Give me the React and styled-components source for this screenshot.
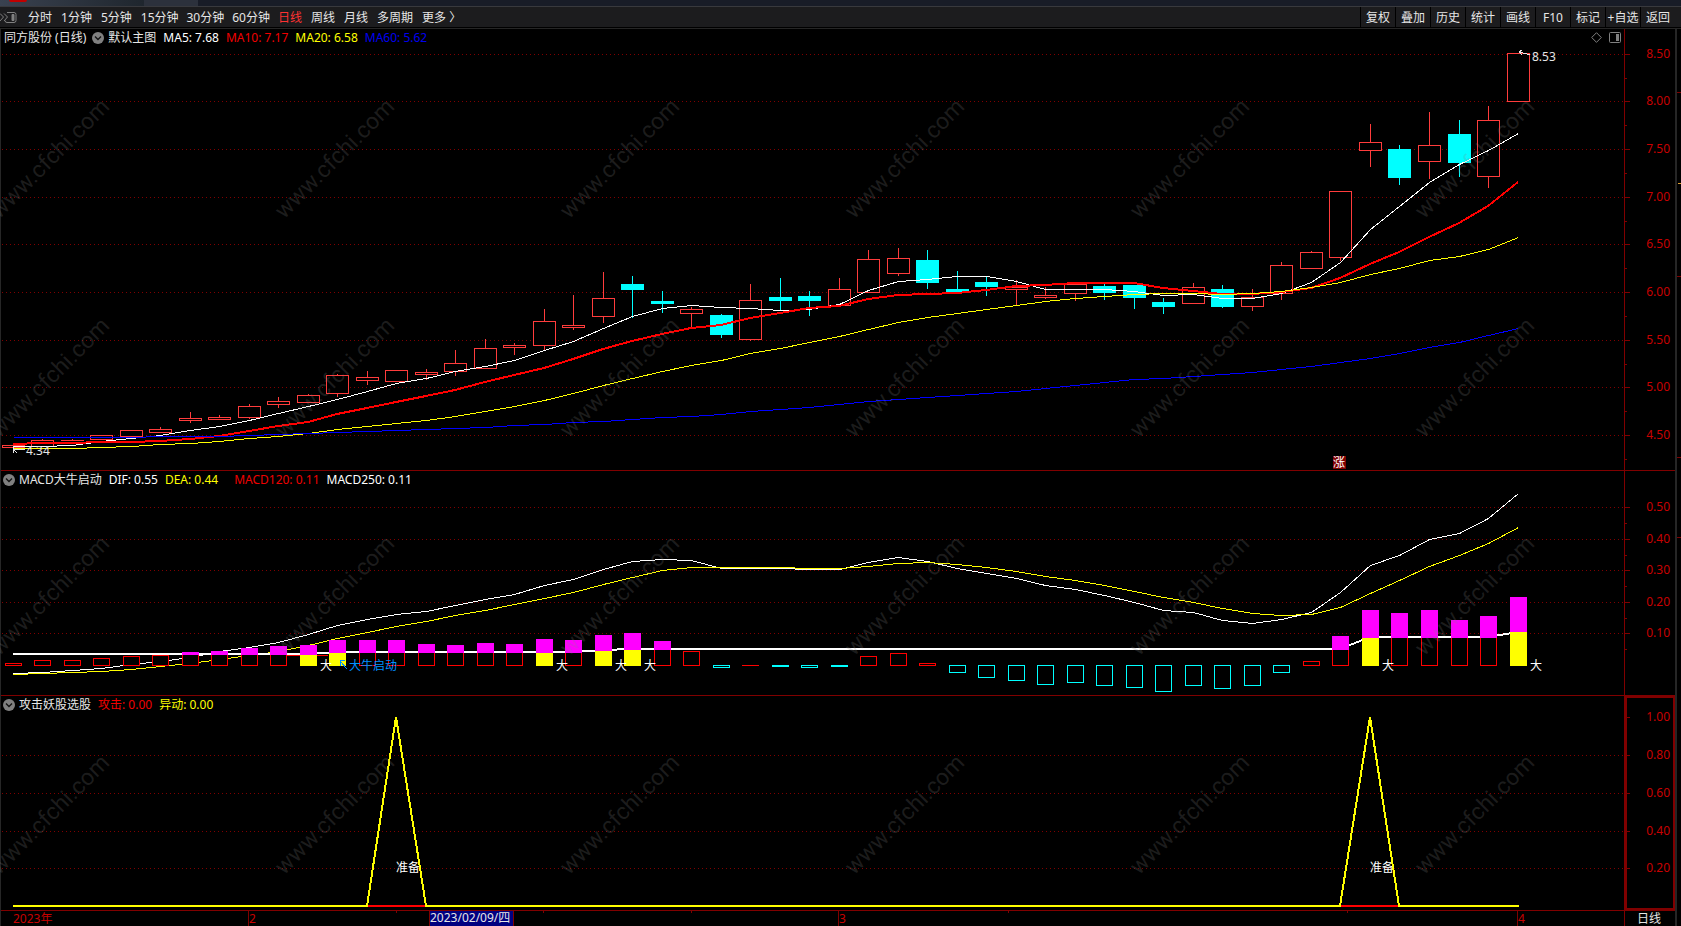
import React from 'react';
import styled, { createGlobalStyle } from 'styled-components';

const GlobalStyle = createGlobalStyle`
    * { box-sizing: border-box; }

    body {
        margin: 0;
        background: #000;
        color: #e6e6e6;
        font: 12px/16px 'Noto Sans', 'Noto Sans CJK SC', sans-serif;
        overflow-x: hidden;
    }

    button {
        font: inherit;
        color: inherit;
        background: none;
        border: 0;
        padding: 0;
        cursor: pointer;
        white-space: nowrap;
    }

    svg { display: block; }
`;

const Page = styled.div`
    display: flex;
    flex-direction: column;
    position: relative;
    overflow: hidden;
`;

const TitleStrip = styled.div`
    height: 7px;
    display: flex;
    background: #181c27;
    border-bottom: 1px solid #38393d;
`;

const StripTab = styled.div`
    width: ${({ $wide }) => ($wide ? '144px' : '54px')};
    padding-left: 9px;
    background: ${({ $wide }) => ($wide ? 'linear-gradient(90deg, #3a4250, #1f262e)' : '#2c313c')};
`;

const RedMark = styled.div`
    width: 18px;
    height: 2px;
    background: #c00000;
    border-radius: 0 0 2px 2px;
`;

const Toolbar = styled.nav`
    height: 21px;
    display: flex;
    align-items: center;
    justify-content: space-between;
    padding-right: 6px;
    background: #1c1c1e;
    border-bottom: 1px solid #000;
`;

const Periods = styled.div`
    display: flex;
    align-items: center;
    gap: 9px;
    padding-top: 2px;
`;

const PeriodButton = styled.button`
    color: ${({ $active }) => ($active ? '#ff3232' : '#e6e6e6')};
    margin-right: ${({ $long }) => ($long ? '-1px' : '0')};
`;

const Tools = styled.div`
    display: flex;
    height: 100%;
`;

const ToolButton = styled.button`
    width: 35px;
    display: flex;
    align-items: center;
    justify-content: center;
    padding-top: 2px;
    border-left: 1px solid #000;
`;

const Body = styled.div`
    display: flex;
    border-top: 1px solid #262626;
`;

const Charts = styled.main`
    flex: 1;
    min-width: 0;
    border-left: 1px solid #262626;
`;

const Panel = styled.section`
    display: flex;
    border-top: ${({ $first }) => ($first ? '0' : '1px solid #800000')};
`;

const Plot = styled.div`
    flex: 1;
    min-width: 0;
    display: flex;
    flex-direction: column;
`;

const Legend = styled.header`
    height: ${({ $tall }) => ($tall ? '19px' : '17px')};
    display: flex;
    align-items: center;
    gap: 6px;
    padding: ${({ $tall }) => ($tall ? '0 3px 2px' : '0 3px 0 2px')};
    white-space: nowrap;
`;

const LegendValue = styled.span`
    color: ${({ $color }) => $color || '#e6e6e6'};
    margin-left: ${({ $spaced }) => ($spaced ? '10px' : '1px')};
`;

const Title = styled.span`
    margin-left: ${({ $tight }) => ($tight ? '-2px' : '0')};
`;

const Corner = styled.div`
    display: flex;
    align-items: center;
    gap: 7px;
    margin-left: auto;
`;

const Drawing = styled.svg`
    width: 100%;
    height: ${({ $height }) => $height}px;
    overflow: hidden;
    shape-rendering: crispEdges;
`;

const Scale = styled.svg`
    flex: none;
    width: 51px;
    height: ${({ $height }) => $height}px;
    fill: #c80000;
    shape-rendering: crispEdges;
`;

const TimeRow = styled.footer`
    display: flex;
    height: 16px;
    border-top: 1px solid #800000;
`;

const PeriodName = styled.div`
    flex: none;
    width: 51px;
    padding-left: 12px;
    line-height: 15px;
    border-left: 1px solid #800000;
`;

const SideRail = styled.aside`
    flex: none;
    width: 6px;
    border-left: 2px solid #262626;
`;

const Watermarks = styled.svg`
    position: absolute;
    left: 0;
    top: 0;
    width: 100%;
    height: 100%;
    pointer-events: none;
    fill: rgba(128, 128, 128, 0.22);
    font: 23px Roboto, sans-serif;
`;

const periods = ['分时', '1分钟', '5分钟', '15分钟', '30分钟', '60分钟', '日线', '周线', '月线', '多周期', '更多 〉'];
const tools = ['复权', '叠加', '历史', '统计', '画线', 'F10', '标记', '+自选', '返回'];

const RED = '#ff3c3c';
const CYAN = '#00ffff';

// [direction, high, top, bottom, low]
const candles = [
    ['u', 445, 445, 447, 447], ['u', 439, 440, 446, 446], ['u', 439, 440, 440, 440], ['u', 435, 435, 439, 439],
    ['u', 430, 430, 436, 436], ['u', 427, 429, 432, 432], ['u', 412, 418, 420, 422], ['u', 415, 417, 419, 419],
    ['u', 404, 406, 417, 418], ['u', 397, 401, 404, 407], ['u', 394, 395, 402, 402], ['u', 374, 375, 393, 396],
    ['u', 371, 377, 380, 384], ['u', 370, 370, 381, 381], ['u', 369, 372, 374, 379], ['u', 350, 363, 371, 375],
    ['u', 339, 348, 368, 368], ['u', 343, 345, 347, 354], ['u', 309, 321, 345, 349], ['u', 295, 325, 327, 329],
    ['u', 272, 298, 316, 322], ['d', 276, 284, 289, 317], ['d', 291, 301, 303, 312], ['u', 307, 309, 313, 327],
    ['d', 314, 315, 334, 337], ['u', 284, 300, 339, 340], ['d', 278, 297, 300, 310], ['d', 291, 296, 300, 315],
    ['u', 278, 289, 305, 305], ['u', 250, 259, 292, 292], ['u', 248, 258, 273, 275], ['d', 250, 260, 282, 288],
    ['d', 271, 289, 291, 292], ['d', 277, 282, 286, 295], ['u', 280, 287, 289, 305], ['u', 287, 295, 297, 298],
    ['u', 284, 284, 293, 300], ['d', 283, 286, 292, 299], ['d', 285, 285, 297, 308], ['d', 298, 302, 306, 313],
    ['u', 283, 287, 303, 303], ['d', 285, 289, 306, 307], ['u', 289, 297, 306, 310], ['u', 262, 265, 293, 299],
    ['u', 251, 252, 268, 268], ['u', 191, 191, 257, 260], ['u', 124, 142, 150, 166], ['d', 145, 149, 177, 184],
    ['u', 112, 145, 161, 178], ['d', 120, 134, 162, 176], ['u', 106, 120, 176, 187], ['u', 53, 53, 101, 101],
];

const ma5 = [446, 446, 445, 441, 438, 435, 430, 426, 420, 413, 406, 399, 391, 383, 378, 371, 366, 360, 350, 341, 328, 316, 308, 305, 307, 308, 310, 309, 304, 290, 281, 279, 276, 276, 281, 289, 289, 289, 291, 295, 294, 298, 298, 293, 282, 262, 229, 206, 182, 164, 150, 133];
const ma10 = [444, 443, 443, 442, 442, 441, 439, 436, 431, 426, 422, 414, 408, 402, 396, 390, 382, 375, 368, 359, 349, 341, 334, 328, 325, 318, 313, 308, 306, 299, 295, 294, 293, 290, 286, 285, 283, 283, 283, 288, 291, 294, 294, 292, 288, 278, 264, 252, 237, 223, 206, 182];
const ma20 = [448, 448, 448, 447, 446, 444, 443, 441, 438, 436, 433, 429, 426, 423, 420, 416, 411, 406, 400, 393, 385, 378, 371, 365, 360, 353, 348, 342, 336, 329, 322, 317, 313, 309, 305, 301, 298, 296, 294, 293, 293, 294, 293, 291, 287, 282, 274, 268, 260, 256, 249, 237];
const ma60 = [437, 437, 437, 437, 437, 436, 436, 436, 435, 434, 433, 432, 431, 430, 429, 428, 427, 425, 424, 422, 421, 419, 417, 416, 414, 411, 409, 407, 404, 401, 399, 397, 395, 393, 391, 388, 385, 382, 379, 378, 376, 374, 372, 369, 366, 362, 358, 353, 347, 342, 335, 328];

const dif = [673, 672, 670, 668, 664, 661, 657, 651, 647, 642, 634, 625, 619, 614, 611, 605, 599, 594, 585, 579, 569, 561, 559, 560, 568, 568, 568, 569, 569, 562, 557, 561, 568, 573, 578, 585, 589, 595, 602, 610, 612, 620, 623, 619, 612, 592, 565, 555, 539, 533, 518, 493];
const dea = [674, 673, 672, 671, 669, 666, 663, 659, 655, 651, 645, 638, 632, 626, 621, 615, 610, 604, 598, 592, 584, 577, 570, 567, 567, 567, 567, 568, 568, 566, 563, 562, 564, 567, 571, 576, 580, 585, 591, 597, 602, 608, 613, 615, 614, 607, 593, 580, 566, 555, 543, 527];

// [kind, edge, split]: r hollow red, c cyan below zero, m magenta over hollow red, y magenta over yellow
const bars = [
    ['r', 663], ['r', 660], ['r', 660], ['r', 658], ['r', 656], ['r', 655], ['m', 652, 655], ['m', 651, 655],
    ['m', 648, 655], ['m', 646, 655], ['y', 645, 655], ['y', 640, 653], ['m', 640, 653], ['m', 640, 653],
    ['m', 644, 653], ['m', 645, 653], ['m', 643, 653], ['m', 644, 653], ['y', 639, 653], ['m', 640, 653],
    ['y', 635, 651], ['y', 633, 650], ['m', 641, 650], ['r', 651], ['c', 667], ['r', 665], ['c', 666], ['c', 667],
    ['c', 666], ['r', 656], ['r', 653], ['r', 663], ['c', 672], ['c', 677], ['c', 680], ['c', 684], ['c', 682],
    ['c', 685], ['c', 687], ['c', 691], ['c', 685], ['c', 688], ['c', 685], ['c', 672], ['r', 661], ['m', 636, 650],
    ['y', 610, 638], ['m', 613, 638], ['m', 610, 638], ['m', 620, 638], ['m', 616, 638], ['y', 597, 632],
];

const priceScale = [['8.50', 54], ['8.00', 101], ['7.50', 149], ['7.00', 197], ['6.50', 244], ['6.00', 292], ['5.50', 340], ['5.00', 387], ['4.50', 435]];
const macdScale = [['0.50', 507], ['0.40', 539], ['0.30', 570], ['0.20', 602], ['0.10', 633]];
const signalScale = [['1.00', 717], ['0.80', 755], ['0.60', 793], ['0.40', 831], ['0.20', 868]];

const ZERO = 665;

const xAt = (i) => Math.floor(13 + 29.5104 * i);

const Line = ({ data, color, width = 1 }) => {
    const shift = width === 1 ? 0.5 : 0;
    const points = data.map((y, i) => `${xAt(i) + shift},${y + shift}`).join(' ');
    return <polyline points={points} fill="none" stroke={color} strokeWidth={width} />;
};

const Grid = ({ scale }) => (
    <g stroke="#800000" strokeDasharray="1 3">
        {scale.map(([label, y]) => (
            <line key={label} x1="2" x2="100%" y1={y + 0.5} y2={y + 0.5} />
        ))}
    </g>
);

const Candle = ({ i, data }) => {
    const [dir, high, top, bottom, low] = data;
    const x = xAt(i);
    const color = dir === 'u' ? RED : CYAN;
    return (
        <g stroke={color}>
            {high < top && <line x1={x + 0.5} x2={x + 0.5} y1={high} y2={top} />}
            {low > bottom && <line x1={x + 0.5} x2={x + 0.5} y1={bottom + 1} y2={low + 1} />}
            {top === bottom
                ? <line x1={x - 11} x2={x + 12} y1={top + 0.5} y2={top + 0.5} />
                : <rect x={x - 10.5} y={top + 0.5} width="22" height={bottom - top} fill={dir === 'u' ? '#000' : color} />}
        </g>
    );
};

const Bar = ({ i, data }) => {
    const [kind, edge, split] = data;
    const x = xAt(i);
    if (kind === 'c') {
        return <rect x={x - 7.5} y={ZERO + 0.5} width="16" height={edge - ZERO} fill="#000" stroke={CYAN} />;
    }
    if (kind === 'r') {
        return edge === ZERO
            ? <line x1={x - 8} x2={x + 9} y1={ZERO + 0.5} y2={ZERO + 0.5} stroke="#f00" />
            : <rect x={x - 7.5} y={edge + 0.5} width="16" height={ZERO - edge} fill="#000" stroke="#f00" />;
    }
    return (
        <g>
            {kind === 'm' && <rect x={x - 7.5} y={split - 0.5} width="16" height={ZERO - split + 1} fill="#000" stroke="#f00" />}
            {kind === 'y' && <rect x={x - 8} y={split} width="17" height={ZERO - split + 1} fill="#ff0" />}
            <rect x={x - 8} y={edge} width="17" height={split - edge} fill="#f0f" />
        </g>
    );
};

const Fold = () => (
    <button aria-label="指标菜单">
        <svg width="12" height="12" viewBox="0 0 12 12">
            <circle cx="6" cy="6" r="6" fill="#808080" />
            <path d="M3 4.5l3 3 3-3" fill="none" stroke="#141414" strokeWidth="1.4" />
        </svg>
    </button>
);

const Axis = ({ scale, top, height, minor, framed }) => (
    <Scale $height={height}>
        <g transform={`translate(0 ${-top})`}>
            <g stroke="#800000">
                <line x1="0.5" x2="0.5" y1={top} y2={top + height} />
                {framed && <rect x="2" y={top + 1} width="48" height={height - 2} fill="none" strokeWidth="2" />}
                {scale.map(([label, y]) => (
                    <path key={label} d={`M1 ${y + 0.5}h5M1 ${y + minor + 0.5}h2`} />
                ))}
            </g>
            {scale.map(([label, y]) => (
                <text key={label} x="46" y={y + 4} textAnchor="end">{label}</text>
            ))}
        </g>
    </Scale>
);

const marked = [10, 18, 20, 21, 46, 51];
const watermarks = [159, 378, 596, 815].flatMap((y) => [50, 335, 620, 905, 1190, 1475].map((x) => [x, y]));
const base250 = bars.map((b, i) => (i < 11 ? 654 : i < 20 ? 652 : i < 21 ? 650 : i < 46 ? 649 : i < 51 ? 637 : 632));

const signal = [13, 906, xAt(12), 906, xAt(13), 717, xAt(14), 906, xAt(45), 906, xAt(46), 717, xAt(47), 906, 1519, 906];

const App = () => {
    return (
        <Page>
            <GlobalStyle />
            <TitleStrip>
                <StripTab $wide><RedMark /></StripTab>
                <StripTab />
            </TitleStrip>
            <Toolbar>
                <Periods>
                    <button aria-label="侧栏">
                        <svg width="19" height="12" viewBox="0 0 19 12" fill="none" stroke="#808080">
                            <path d="M0 1.5l3.5 3.5L0 9M4 1.5l3.5 3.5L4 9" />
                            <path d="M7 .5h7q2 0 2 2v6q0 2-2 2H7q-2 0-2-2" />
                            <path d="M12 2.5h2v6h-2z" fill="#808080" />
                        </svg>
                    </button>
                    {periods.map((name) => (
                        <PeriodButton key={name} $active={name === '日线'} $long={/^\d{2}/.test(name)}>{name}</PeriodButton>
                    ))}
                </Periods>
                <Tools>
                    {tools.map((name) => <ToolButton key={name}>{name}</ToolButton>)}
                </Tools>
            </Toolbar>
            <Body>
                <Charts>
                    <Panel $first>
                        <Plot>
                            <Legend $tall>
                                <Title>同方股份 (日线)</Title>
                                <Fold />
                                <Title $tight>默认主图</Title>
                                <LegendValue $color="#fff">MA5: 7.68</LegendValue>
                                <LegendValue $color="#f00000">MA10: 7.17</LegendValue>
                                <LegendValue $color="#ff0">MA20: 6.58</LegendValue>
                                <LegendValue $color="#0000f0">MA60: 5.62</LegendValue>
                                <Corner>
                                    <button aria-label="标记">
                                        <svg width="11" height="11" fill="none" stroke="#808080"><path d="M5.5 .7l4.8 4.8-4.8 4.8L.7 5.5z" /></svg>
                                    </button>
                                    <button aria-label="面板">
                                        <svg width="12" height="11" fill="none" stroke="#808080">
                                            <rect x=".5" y=".5" width="11" height="10" rx="1" />
                                            <path d="M7 2h3v7H7z" fill="#808080" stroke="none" />
                                        </svg>
                                    </button>
                                </Corner>
                            </Legend>
                            <Drawing $height={422}>
                                <g transform="translate(-1 -48)">
                                    <Grid scale={priceScale} />
                                    {candles.map((c, i) => <Candle key={i} i={i} data={c} />)}
                                    <Line data={ma5} color="#fff" />
                                    <Line data={ma10} color="#f00" width={2} />
                                    <Line data={ma20} color="#ff0" />
                                    <Line data={ma60} color="#00f" />
                                    <g fill="none" stroke="#e6e6e6">
                                        <path d="M13 449.5h12M13.5 446v7M13 449l4 4" />
                                        <path d="M1530 55l-3-1-8-2M1519 52l3-2M1519 52l3 3" />
                                    </g>
                                    <text x="26" y="455" fill="#e6e6e6">4.34</text>
                                    <text x="1532" y="61" fill="#e6e6e6">8.53</text>
                                    <rect x="1333" y="456" width="13" height="13" fill="#800000" />
                                    <text x="1333" y="467" fill="#fff">涨</text>
                                </g>
                            </Drawing>
                        </Plot>
                        <Axis scale={priceScale} top={29} height={441} minor={24} />
                    </Panel>
                    <Panel>
                        <Plot>
                            <Legend>
                                <Fold />
                                <Title $tight>MACD大牛启动</Title>
                                <LegendValue $color="#fff">DIF: 0.55</LegendValue>
                                <LegendValue $color="#ff0">DEA: 0.44</LegendValue>
                                <LegendValue $color="#f00000" $spaced>MACD120: 0.11</LegendValue>
                                <LegendValue $color="#fff">MACD250: 0.11</LegendValue>
                            </Legend>
                            <Drawing $height={207}>
                                <g transform="translate(-1 -488)">
                                    <Grid scale={macdScale} />
                                    <Line data={dif} color="#fff" />
                                    <Line data={dea} color="#ff0" />
                                    <path d="M278 655.5h50" stroke="#f00" />
                                    <Line data={base250} color="#fff" width={2} />
                                    {bars.map((b, i) => <Bar key={i} i={i} data={b} />)}
                                    {marked.map((i) => (
                                        <text key={i} x={xAt(i) + 12} y="670" fill="#fff">大</text>
                                    ))}
                                    <path d="M347 669l-7-8M340 666v-6h5" fill="none" stroke="#0090ff" />
                                    <text x="349" y="670" fill="#0090ff">大牛启动</text>
                                </g>
                            </Drawing>
                        </Plot>
                        <Axis scale={macdScale} top={471} height={224} minor={16} />
                    </Panel>
                    <Panel>
                        <Plot>
                            <Legend>
                                <Fold />
                                <Title $tight>攻击妖股选股</Title>
                                <LegendValue $color="#f00000">攻击: 0.00</LegendValue>
                                <LegendValue $color="#ff0">异动: 0.00</LegendValue>
                            </Legend>
                            <Drawing $height={197}>
                                <g transform="translate(-1 -713)">
                                    <Grid scale={signalScale.slice(1)} />
                                    {[13, 46].map((i) => (
                                        <text key={i} x={xAt(i)} y="872" fill="#fff">准备</text>
                                    ))}
                                    {[12, 45].map((i) => (
                                        <path key={i} d={`M${xAt(i)} 906H${xAt(i + 2)}`} stroke="#f00" strokeWidth="2" />
                                    ))}
                                    <polyline points={signal.join(' ')} fill="none" stroke="#ff0" strokeWidth="2" />
                                </g>
                            </Drawing>
                        </Plot>
                        <Axis scale={signalScale} top={696} height={214} minor={19} framed />
                    </Panel>
                    <TimeRow>
                        <Drawing $height={15}>
                            <g transform="translate(-1 0)" fill="#c80000">
                                <text x="13" y="12">2023年</text>
                                {[[8, '2'], [28, '3'], [51, '4']].map(([i, month]) => (
                                    <g key={month}>
                                        <path d={`M${xAt(i) - 0.5} 0v15`} stroke="#800000" />
                                        <text x={xAt(i)} y="12">{month}</text>
                                    </g>
                                ))}
                                <path d="M396.5 0v2M543.5 0v2M691.5 0v2M1008.5 0v2M1347.5 0v2" stroke="#800000" />
                                <rect x="429" y="0" width="84" height="15" fill="#000080" />
                                <path d="M429.5 0v15M513.5 0v15" stroke="#800000" />
                                <text x="430" y="11" fill="#e6e6e6">2023/02/09/四</text>
                            </g>
                        </Drawing>
                        <PeriodName>日线</PeriodName>
                    </TimeRow>
                </Charts>
                <SideRail>
                    <svg width="4" height="600" stroke="#800000">
                        <path d="M0 63.5h4M0 247.5h4M0 428.5h4M0 508.5h4" />
                        <path d="M1 154.5h3" stroke="#e0a030" />
                    </svg>
                </SideRail>
            </Body>
            <Watermarks aria-hidden="true">
                {watermarks.map(([x, y]) => (
                    <text key={`${x}-${y}`} transform={`translate(${x} ${y}) rotate(-45)`} y="7" textAnchor="middle">www.cfchi.com</text>
                ))}
            </Watermarks>
        </Page>
    );
};

export default App;
